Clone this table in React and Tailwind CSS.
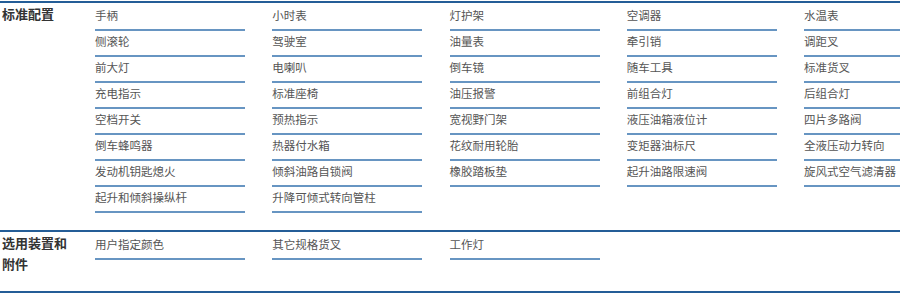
import React from "react";

const standard = [
  "手柄", "小时表", "灯护架", "空调器", "水温表",
  "侧滚轮", "驾驶室", "油量表", "牵引销", "调距叉",
  "前大灯", "电喇叭", "倒车镜", "随车工具", "标准货叉",
  "充电指示", "标准座椅", "油压报警", "前组合灯", "后组合灯",
  "空档开关", "预热指示", "宽视野门架", "液压油箱液位计", "四片多路阀",
  "倒车蜂鸣器", "热器付水箱", "花纹耐用轮胎", "变矩器油标尺", "全液压动力转向",
  "发动机钥匙熄火", "倾斜油路自锁阀", "橡胶踏板垫", "起升油路限速阀", "旋风式空气滤清器",
  "起升和倾斜操纵杆", "升降可倾式转向管柱",
];

const optional = ["用户指定颜色", "其它规格货叉", "工作灯"];

const Section = ({ title, items, last }) => (
  <div
    className={`grid grid-cols-[95px_1fr] border-t-2 border-[#245d97] pb-[17px] ${
      last ? "border-b-2" : ""
    }`}
  >
    <div className="w-[72px] pl-[2px] text-[13px] font-bold leading-[21px] text-[#333]">
      {title}
    </div>
    <div className="grid grid-cols-[repeat(5,150px)] gap-x-[27.25px] pt-[2px]">
      {items.map((it) => (
        <div
          key={it}
          className="flex h-[26px] items-center whitespace-nowrap border-b-2 border-[#6795c2] pb-[2px] text-[11.5px] text-[#555]"
        >
          {it}
        </div>
      ))}
    </div>
  </div>
);

export default function App() {
  return (
    <div
      className="h-[293px] w-[900px] overflow-hidden bg-white pt-px"
      style={{ fontFamily: '"Noto Sans CJK SC", "Noto Sans", sans-serif' }}
    >
      <Section title="标准配置" items={standard} />
      <Section title="选用装置和附件" items={optional} last />
    </div>
  );
}
